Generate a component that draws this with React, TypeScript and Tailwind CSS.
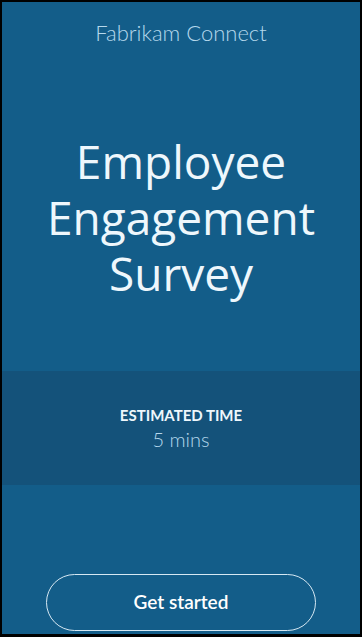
export default function App() {
  return (
    <div className="flex h-[637px] w-[362px] flex-col border-2 border-b-[3px] border-black bg-[#135d89] font-['Lato',sans-serif]">
      <p className="pt-[17px] text-center text-[22px] font-light leading-[28px] text-[#b5d8ec]">
        Fabrikam Connect
      </p>

      <h1 className="mt-[86px] text-center font-['Open_Sans',sans-serif] text-[46px] font-normal leading-[56px] text-[#eef7fc]">
        Employee
        <br />
        Engagement
        <br />
        Survey
      </h1>

      <section className="mt-[70px] bg-[#14527a] pb-[34px] pt-[34px] text-center">
        <p className="text-[15px] font-bold leading-[20px] text-[#eef7fc]">ESTIMATED TIME</p>
        <p className="mt-[2px] text-[20px] font-light leading-[24px] text-[#b5d8ec]">5 mins</p>
      </section>

      <div className="mt-auto flex justify-center pb-[3px]">
        <button className="h-[57px] w-[270px] rounded-full border border-[#d6e8f3] text-[19px] font-semibold text-white">
          Get started
        </button>
      </div>
    </div>
  );
}
